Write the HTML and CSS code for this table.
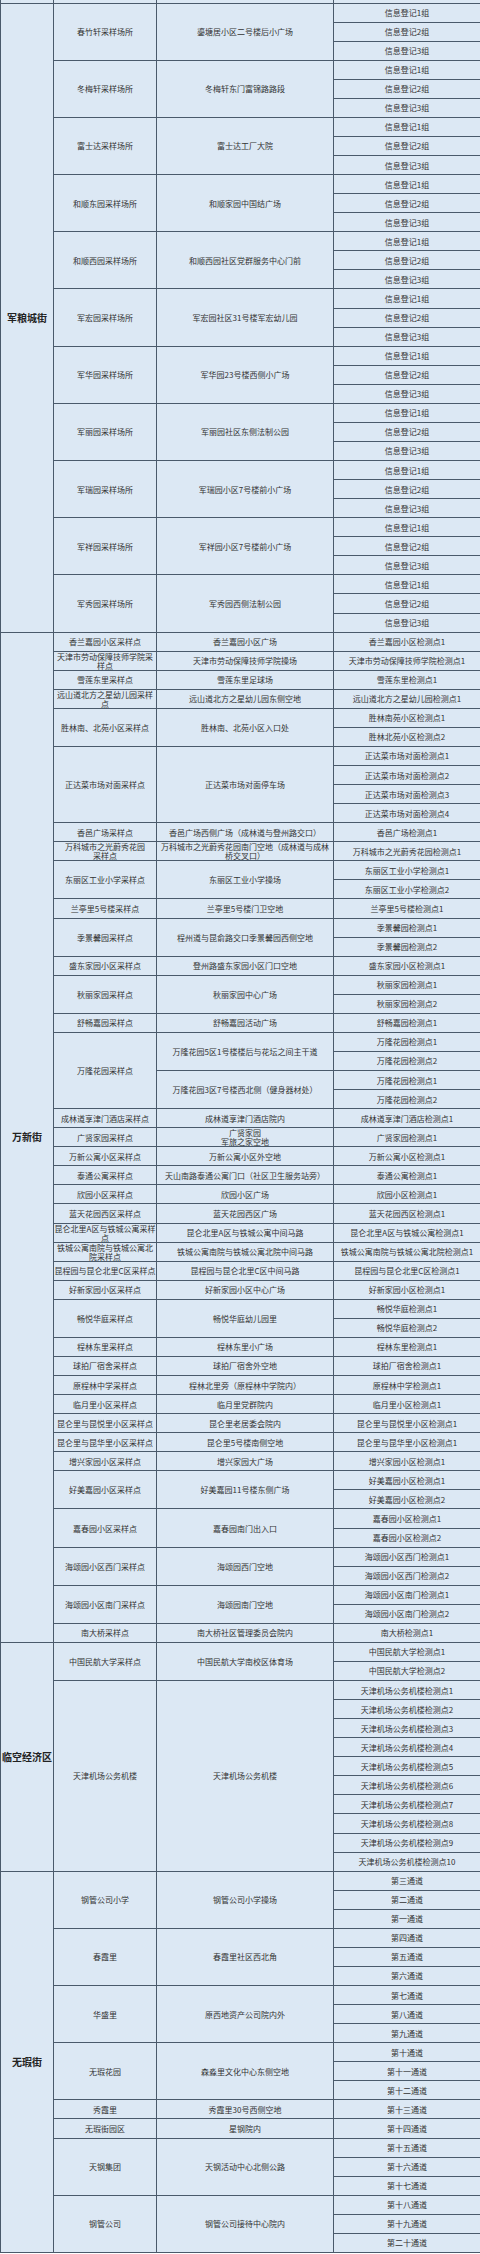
FILE: index.html
```html
<!DOCTYPE html>
<html lang="zh-CN">
<head>
<meta charset="utf-8">
<title>核酸检测采样点</title>
<link rel="stylesheet" href="styles.css">
</head>
<body>
<table class="sites">
<colgroup><col class="c1"><col class="c2"><col class="c3"><col class="c4"></colgroup>
<tbody>
<tr class="top"><td></td><td></td><td></td><td></td></tr>

<tr><td rowspan="33" class="st">军粮城街</td><td rowspan="3">春竹轩采样场所</td><td rowspan="3">鎏塘居小区二号楼后小广场</td><td>信息登记1组</td></tr>
<tr><td>信息登记2组</td></tr>
<tr><td>信息登记3组</td></tr>
<tr><td rowspan="3">冬梅轩采样场所</td><td rowspan="3">冬梅轩东门富锦路路段</td><td>信息登记1组</td></tr>
<tr><td>信息登记2组</td></tr>
<tr><td>信息登记3组</td></tr>
<tr><td rowspan="3">富士达采样场所</td><td rowspan="3">富士达工厂大院</td><td>信息登记1组</td></tr>
<tr><td>信息登记2组</td></tr>
<tr><td>信息登记3组</td></tr>
<tr><td rowspan="3">和顺东园采样场所</td><td rowspan="3">和顺家园中国结广场</td><td>信息登记1组</td></tr>
<tr><td>信息登记2组</td></tr>
<tr><td>信息登记3组</td></tr>
<tr><td rowspan="3">和顺西园采样场所</td><td rowspan="3">和顺西园社区党群服务中心门前</td><td>信息登记1组</td></tr>
<tr><td>信息登记2组</td></tr>
<tr><td>信息登记3组</td></tr>
<tr><td rowspan="3">军宏园采样场所</td><td rowspan="3">军宏园社区31号楼军宏幼儿园</td><td>信息登记1组</td></tr>
<tr><td>信息登记2组</td></tr>
<tr><td>信息登记3组</td></tr>
<tr><td rowspan="3">军华园采样场所</td><td rowspan="3">军华园23号楼西侧小广场</td><td>信息登记1组</td></tr>
<tr><td>信息登记2组</td></tr>
<tr><td>信息登记3组</td></tr>
<tr><td rowspan="3">军丽园采样场所</td><td rowspan="3">军丽园社区东侧法制公园</td><td>信息登记1组</td></tr>
<tr><td>信息登记2组</td></tr>
<tr><td>信息登记3组</td></tr>
<tr><td rowspan="3">军瑞园采样场所</td><td rowspan="3">军瑞园小区7号楼前小广场</td><td>信息登记1组</td></tr>
<tr><td>信息登记2组</td></tr>
<tr><td>信息登记3组</td></tr>
<tr><td rowspan="3">军祥园采样场所</td><td rowspan="3">军祥园小区7号楼前小广场</td><td>信息登记1组</td></tr>
<tr><td>信息登记2组</td></tr>
<tr><td>信息登记3组</td></tr>
<tr><td rowspan="3">军秀园采样场所</td><td rowspan="3">军秀园西侧法制公园</td><td>信息登记1组</td></tr>
<tr><td>信息登记2组</td></tr>
<tr><td>信息登记3组</td></tr>

<tr><td rowspan="53" class="st">万新街</td><td>香兰嘉园小区采样点</td><td>香兰嘉园小区广场</td><td>香兰嘉园小区检测点1</td></tr>
<tr><td>天津市劳动保障技师学院采<br>样点</td><td>天津市劳动保障技师学院操场</td><td>天津市劳动保障技师学院检测点1</td></tr>
<tr><td>雪莲东里采样点</td><td>雪莲东里足球场</td><td>雪莲东里检测点1</td></tr>
<tr><td>远山道北方之星幼儿园采样<br>点</td><td>远山道北方之星幼儿园东侧空地</td><td>远山道北方之星幼儿园检测点1</td></tr>
<tr><td rowspan="2">胜林南、北苑小区采样点</td><td rowspan="2">胜林南、北苑小区入口处</td><td>胜林南苑小区检测点1</td></tr>
<tr><td>胜林北苑小区检测点2</td></tr>
<tr><td rowspan="4">正达菜市场对面采样点</td><td rowspan="4">正达菜市场对面停车场</td><td>正达菜市场对面检测点1</td></tr>
<tr><td>正达菜市场对面检测点2</td></tr>
<tr><td>正达菜市场对面检测点3</td></tr>
<tr><td>正达菜市场对面检测点4</td></tr>
<tr><td>香邑广场采样点</td><td>香邑广场西侧广场（成林道与登州路交口）</td><td>香邑广场检测点1</td></tr>
<tr><td>万科城市之光蔚秀花园<br>采样点</td><td>万科城市之光蔚秀花园南门空地（成林道与成林<br>桥交叉口）</td><td>万科城市之光蔚秀花园检测点1</td></tr>
<tr><td rowspan="2">东丽区工业小学采样点</td><td rowspan="2">东丽区工业小学操场</td><td>东丽区工业小学检测点1</td></tr>
<tr><td>东丽区工业小学检测点2</td></tr>
<tr><td>兰亭里5号楼采样点</td><td>兰亭里5号楼门卫空地</td><td>兰亭里5号楼检测点1</td></tr>
<tr><td rowspan="2">季景馨园采样点</td><td rowspan="2">程州道与昆俞路交口季景馨园西侧空地</td><td>季景馨园检测点1</td></tr>
<tr><td>季景馨园检测点2</td></tr>
<tr><td>盛东家园小区采样点</td><td>登州路盛东家园小区门口空地</td><td>盛东家园小区检测点1</td></tr>
<tr><td rowspan="2">秋丽家园采样点</td><td rowspan="2">秋丽家园中心广场</td><td>秋丽家园检测点1</td></tr>
<tr><td>秋丽家园检测点2</td></tr>
<tr><td>舒畅嘉园采样点</td><td>舒畅嘉园活动广场</td><td>舒畅嘉园检测点1</td></tr>
<tr><td rowspan="4">万隆花园采样点</td><td rowspan="2">万隆花园5区1号楼楼后与花坛之间主干道</td><td>万隆花园检测点1</td></tr>
<tr><td>万隆花园检测点2</td></tr>
<tr><td rowspan="2">万隆花园3区7号楼西北侧（健身器材处）</td><td>万隆花园检测点1</td></tr>
<tr><td>万隆花园检测点2</td></tr>
<tr><td>成林道享津门酒店采样点</td><td>成林道享津门酒店院内</td><td>成林道享津门酒店检测点1</td></tr>
<tr><td>广贤家园采样点</td><td>广贤家园<br>军旅之家空地</td><td>广贤家园检测点1</td></tr>
<tr><td>万新公寓小区采样点</td><td>万新公寓小区外空地</td><td>万新公寓小区检测点1</td></tr>
<tr><td>泰通公寓采样点</td><td>天山南路泰通公寓门口（社区卫生服务站旁）</td><td>泰通公寓检测点1</td></tr>
<tr><td>欣园小区采样点</td><td>欣园小区广场</td><td>欣园小区检测点1</td></tr>
<tr><td>蓝天花园西区采样点</td><td>蓝天花园西区广场</td><td>蓝天花园西区检测点1</td></tr>
<tr><td>昆仑北里A区与铁城公寓采样<br>点</td><td>昆仑北里A区与铁城公寓中间马路</td><td>昆仑北里A区与铁城公寓检测点1</td></tr>
<tr><td>铁城公寓南院与铁城公寓北<br>院采样点</td><td>铁城公寓南院与铁城公寓北院中间马路</td><td>铁城公寓南院与铁城公寓北院检测点1</td></tr>
<tr><td>昆程园与昆仑北里C区采样点</td><td>昆程园与昆仑北里C区中间马路</td><td>昆程园与昆仑北里C区检测点1</td></tr>
<tr><td>好新家园小区采样点</td><td>好新家园小区中心广场</td><td>好新家园小区检测点1</td></tr>
<tr><td rowspan="2">畅悦华庭采样点</td><td rowspan="2">畅悦华庭幼儿园里</td><td>畅悦华庭检测点1</td></tr>
<tr><td>畅悦华庭检测点2</td></tr>
<tr><td>程林东里采样点</td><td>程林东里小广场</td><td>程林东里检测点1</td></tr>
<tr><td>球拍厂宿舍采样点</td><td>球拍厂宿舍外空地</td><td>球拍厂宿舍检测点1</td></tr>
<tr><td>原程林中学采样点</td><td>程林北里旁（原程林中学院内）</td><td>原程林中学检测点1</td></tr>
<tr><td>临月里小区采样点</td><td>临月里党群院内</td><td>临月里小区检测点1</td></tr>
<tr><td>昆仑里与昆悦里小区采样点</td><td>昆仑里老居委会院内</td><td>昆仑里与昆悦里小区检测点1</td></tr>
<tr><td>昆仑里与昆华里小区采样点</td><td>昆仑里5号楼南侧空地</td><td>昆仑里与昆华里小区检测点1</td></tr>
<tr><td>增兴家园小区采样点</td><td>增兴家园大广场</td><td>增兴家园小区检测点1</td></tr>
<tr><td rowspan="2">好美嘉园小区采样点</td><td rowspan="2">好美嘉园11号楼东侧广场</td><td>好美嘉园小区检测点1</td></tr>
<tr><td>好美嘉园小区检测点2</td></tr>
<tr><td rowspan="2">嘉春园小区采样点</td><td rowspan="2">嘉春园南门出入口</td><td>嘉春园小区检测点1</td></tr>
<tr><td>嘉春园小区检测点2</td></tr>
<tr><td rowspan="2">海颂园小区西门采样点</td><td rowspan="2">海颂园西门空地</td><td>海颂园小区西门检测点1</td></tr>
<tr><td>海颂园小区西门检测点2</td></tr>
<tr><td rowspan="2">海颂园小区南门采样点</td><td rowspan="2">海颂园南门空地</td><td>海颂园小区南门检测点1</td></tr>
<tr><td>海颂园小区南门检测点2</td></tr>
<tr><td>南大桥采样点</td><td>南大桥社区管理委员会院内</td><td>南大桥检测点1</td></tr>

<tr><td rowspan="12" class="st">临空经济区</td><td rowspan="2">中国民航大学采样点</td><td rowspan="2">中国民航大学南校区体育场</td><td>中国民航大学检测点1</td></tr>
<tr><td>中国民航大学检测点2</td></tr>
<tr><td rowspan="10">天津机场公务机楼</td><td rowspan="10">天津机场公务机楼</td><td>天津机场公务机楼检测点1</td></tr>
<tr><td>天津机场公务机楼检测点2</td></tr>
<tr><td>天津机场公务机楼检测点3</td></tr>
<tr><td>天津机场公务机楼检测点4</td></tr>
<tr><td>天津机场公务机楼检测点5</td></tr>
<tr><td>天津机场公务机楼检测点6</td></tr>
<tr><td>天津机场公务机楼检测点7</td></tr>
<tr><td>天津机场公务机楼检测点8</td></tr>
<tr><td>天津机场公务机楼检测点9</td></tr>
<tr><td>天津机场公务机楼检测点10</td></tr>

<tr><td rowspan="20" class="st">无瑕街</td><td rowspan="3">钢管公司小学</td><td rowspan="3">钢管公司小学操场</td><td>第三通道</td></tr>
<tr><td>第二通道</td></tr>
<tr><td>第一通道</td></tr>
<tr><td rowspan="3">春霞里</td><td rowspan="3">春霞里社区西北角</td><td>第四通道</td></tr>
<tr><td>第五通道</td></tr>
<tr><td>第六通道</td></tr>
<tr><td rowspan="3">华盛里</td><td rowspan="3">原西地资产公司院内外</td><td>第七通道</td></tr>
<tr><td>第八通道</td></tr>
<tr><td>第九通道</td></tr>
<tr><td rowspan="3">无瑕花园</td><td rowspan="3">森淼里文化中心东侧空地</td><td>第十通道</td></tr>
<tr><td>第十一通道</td></tr>
<tr><td>第十二通道</td></tr>
<tr><td>秀霞里</td><td>秀霞里30号西侧空地</td><td>第十三通道</td></tr>
<tr><td>无瑕街园区</td><td>星钢院内</td><td>第十四通道</td></tr>
<tr><td rowspan="3">天钢集团</td><td rowspan="3">天钢活动中心北侧公路</td><td>第十五通道</td></tr>
<tr><td>第十六通道</td></tr>
<tr><td>第十七通道</td></tr>
<tr><td rowspan="3">钢管公司</td><td rowspan="3">钢管公司接待中心院内</td><td>第十八通道</td></tr>
<tr><td>第十九通道</td></tr>
<tr><td>第二十通道</td></tr>
</tbody>
</table>
</body>
</html>
```
FILE: styles.css
```css
html, body {
  margin: 0;
  padding: 0;
  background: #ffffff;
}

.sites {
  width: 480px;
  table-layout: fixed;
  border-collapse: collapse;
  background: #dce8f4;
  color: #333333;
  font-family: "Noto Sans CJK SC", "Noto Sans", sans-serif;
  font-size: 8px;
  line-height: 9px;
}

.c1 { width: 53px; }
.c2 { width: 103px; }
.c3 { width: 177px; }
.c4 { width: 147px; }

.sites tr {
  height: 19.075px;
}

.sites td {
  border: 1px solid #4a5a6b;
  padding: 0;
  text-align: center;
  vertical-align: middle;
  white-space: nowrap;
  overflow: hidden;
}

.sites tr.top {
  height: 3px;
}

.sites tr.top td {
  border-top: 0;
}

.sites td.st {
  font-size: 10px;
  font-weight: 700;
  color: #222222;
  line-height: 12px;
}
```
